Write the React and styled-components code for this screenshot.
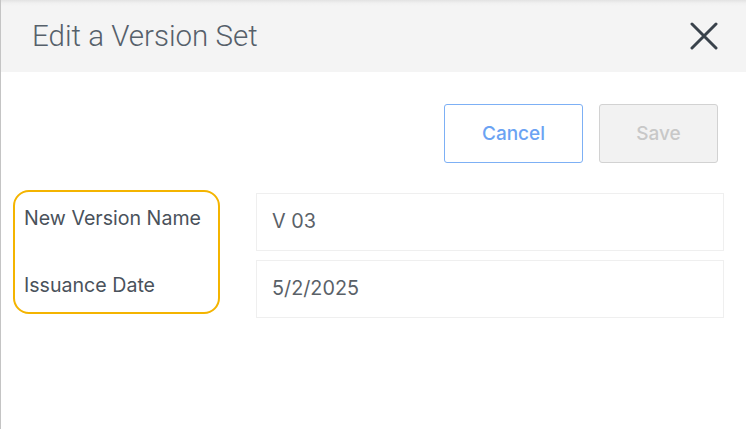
import React from 'react';
import styled, { createGlobalStyle } from 'styled-components';

const GlobalStyle = createGlobalStyle`
  html, body {
    margin: 0;
    padding: 0;
    background: #fff;
  }
  body {
    font-family: Inter, Roboto, "Liberation Sans", Arial, sans-serif;
  }
`;

const Dialog = styled.div`
  width: 746px;
  height: 429px;
  box-sizing: border-box;
  border-left: 1px solid #c4c4c4;
  background: #fff;
  overflow: hidden;
`;

const Header = styled.div`
  height: 72px;
  display: flex;
  align-items: center;
  justify-content: space-between;
  padding: 0 28px 0 31px;
  background: linear-gradient(180deg, #e2e2e2 0px, #f0f0f0 3px, #f4f4f4 6px);
`;

const Title = styled.h2`
  margin: 0;
  font-family: Roboto, "Liberation Sans", Arial, sans-serif;
  font-size: 29.5px;
  font-weight: 300;
  color: #56606a;
`;

const CloseButton = styled.button`
  border: none;
  background: none;
  padding: 0;
  width: 28px;
  height: 28px;
  display: flex;
  align-items: center;
  justify-content: center;
  cursor: pointer;
`;

const Body = styled.div`
  padding: 32px 22px 0 23px;
`;

const Actions = styled.div`
  display: flex;
  justify-content: flex-end;
  gap: 16px;
  padding-right: 6px;
`;

const Button = styled.button`
  height: 59px;
  width: ${(p) => p.$width}px;
  box-sizing: border-box;
  border-radius: 3px;
  font-family: Inter, Roboto, "Liberation Sans", Arial, sans-serif;
  font-size: 19px;
  font-weight: 500;
  cursor: pointer;
  border: 1.5px solid ${(p) => (p.$disabled ? '#d2d2d2' : '#7db0f5')};
  background: ${(p) => (p.$disabled ? '#f2f2f2' : '#fff')};
  color: ${(p) => (p.$disabled ? '#c8c8c8' : '#6ba3f3')};
`;

const Form = styled.div`
  position: relative;
  margin-top: 30px;
  display: grid;
  grid-template-columns: 232px 1fr;
  row-gap: 9px;
`;

const Label = styled.label`
  font-size: 19.6px;
  color: #4a525b;
  padding-top: 13px;
`;

const Field = styled.div`
  height: 58px;
  box-sizing: border-box;
  border: 1px solid #efefef;
  display: flex;
  align-items: center;
  padding: 0 15px 3px;
  font-size: 19.8px;
  color: #5a6168;
`;

const Highlight = styled.div`
  position: absolute;
  left: -11px;
  top: -3px;
  width: 207px;
  height: 124px;
  box-sizing: border-box;
  border: 2.5px solid #f4b400;
  border-radius: 16px;
  pointer-events: none;
`;

const CloseIcon = () => (
  <svg width="28" height="28" viewBox="0 0 28 28">
    <path d="M2 2 L26 26 M26 2 L2 26" stroke="#39424b" strokeWidth="3" strokeLinecap="round" />
  </svg>
);

export default function App() {
  return (
    <Dialog>
      <GlobalStyle />
      <Header>
        <Title>Edit a Version Set</Title>
        <CloseButton aria-label="Close">
          <CloseIcon />
        </CloseButton>
      </Header>
      <Body>
        <Actions>
          <Button $width={139}>Cancel</Button>
          <Button $width={119} $disabled>Save</Button>
        </Actions>
        <Form>
          <Label>New Version Name</Label>
          <Field>V 03</Field>
          <Label>Issuance Date</Label>
          <Field>5/2/2025</Field>
          <Highlight />
        </Form>
      </Body>
    </Dialog>
  );
}
